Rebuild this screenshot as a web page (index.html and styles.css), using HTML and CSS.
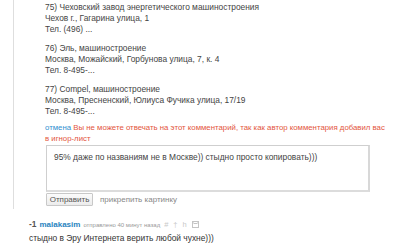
FILE: index.html
```html
<!DOCTYPE html>
<html>
<head>
<meta charset="utf-8">
<link rel="stylesheet" href="styles.css">
</head>
<body>
<div class="thread">
  <div class="entries">
    <p class="entry">75) Чеховский завод энергетического машиностроения<br>Чехов г., Гагарина улица, 1<br>Тел. (496) ...</p>
    <p class="entry">76) Эль, машиностроение<br>Москва, Можайский, Горбунова улица, 7, к. 4<br>Тел. 8-495-...</p>
    <p class="entry">77) Compel, машиностроение<br>Москва, Пресненский, Юлиуса Фучика улица, 17/19<br>Тел. 8-495-...</p>
  </div>
  <div class="notice"><span class="cancel">отмена</span> <span class="warn">Вы не можете отвечать на этот комментарий, так как автор комментария добавил вас в игнор-лист</span></div>
  <div class="textarea">95% даже по названиям не в Москве)) стыдно просто копировать)))</div>
  <div class="actions">
    <button class="btn">Отправить</button>
    <span class="attach">прикрепить картинку</span>
  </div>
</div>
<div class="comment">
  <div class="meta">
    <span class="score">-1</span>
    <span class="user">malakasim</span>
    <span class="time">отправлено 40 минут назад</span>
    <span class="icons"><span>#</span><span>†</span><span>h</span><svg class="save" width="7" height="7" viewBox="0 0 7 7"><rect x="0.5" y="0.5" width="6" height="6" fill="none" stroke="#c4c4c4"/><rect x="2" y="0.5" width="3" height="2" fill="none" stroke="#c4c4c4"/></svg></span>
  </div>
  <div class="text">стыдно в Эру Интернета верить любой чухне)))</div>
</div>
</body>
</html>
```
FILE: styles.css
```css
html, body {
  margin: 0;
  padding: 0;
  background: #fff;
}
body {
  font-family: "Liberation Sans", Arial, sans-serif;
  font-size: 8.4px;
  line-height: 11px;
  color: #444;
}
.thread {
  margin-left: 13px;
  border-left: 1px solid #dedede;
  padding: 2px 0 3px 31px;
}
.entries .entry {
  margin: 0 0 8px 0;
}
.entries .entry:last-child {
  margin-bottom: 5px;
}
.notice {
  width: 342px;
  font-size: 7.8px;
}
.cancel {
  color: #2f8fd0;
}
.warn {
  color: #e3553d;
}
.textarea {
  margin: 1px 0 0 1px;
  width: 307px;
  height: 38px;
  padding: 6px 7px 0 7px;
  border: 1px solid #cfcfcf;
  border-right: 2px solid #d8d8d8;
  border-bottom: 2px solid #dcdcdc;
  color: #444;
}
.actions {
  display: flex;
  align-items: center;
  gap: 7px;
  padding: 1px 0 0 1px;
  height: 13px;
}
.btn {
  font: inherit;
  font-size: 8px;
  line-height: 10px;
  color: #555;
  width: 47px;
  height: 13px;
  padding: 0;
  border: 1px solid #c8c8c8;
  border-radius: 1px;
  background: linear-gradient(#fbfbfb, #ececec);
}
.attach {
  color: #888;
  font-size: 8px;
}
.comment {
  padding: 10px 0 0 29px;
}
.meta {
  display: flex;
  align-items: baseline;
  gap: 3px;
  height: 14px;
}
.score {
  font-weight: bold;
  color: #555;
  font-size: 8.4px;
}
.user {
  font-weight: bold;
  color: #2a84c0;
  font-size: 8px;
}
.time {
  color: #999;
  font-size: 6px;
}
.icons {
  display: flex;
  align-items: center;
  gap: 5px;
  color: #c8c8c8;
  font-size: 7.5px;
  margin-left: 1px;
}
.text {
  color: #333;
}
```
